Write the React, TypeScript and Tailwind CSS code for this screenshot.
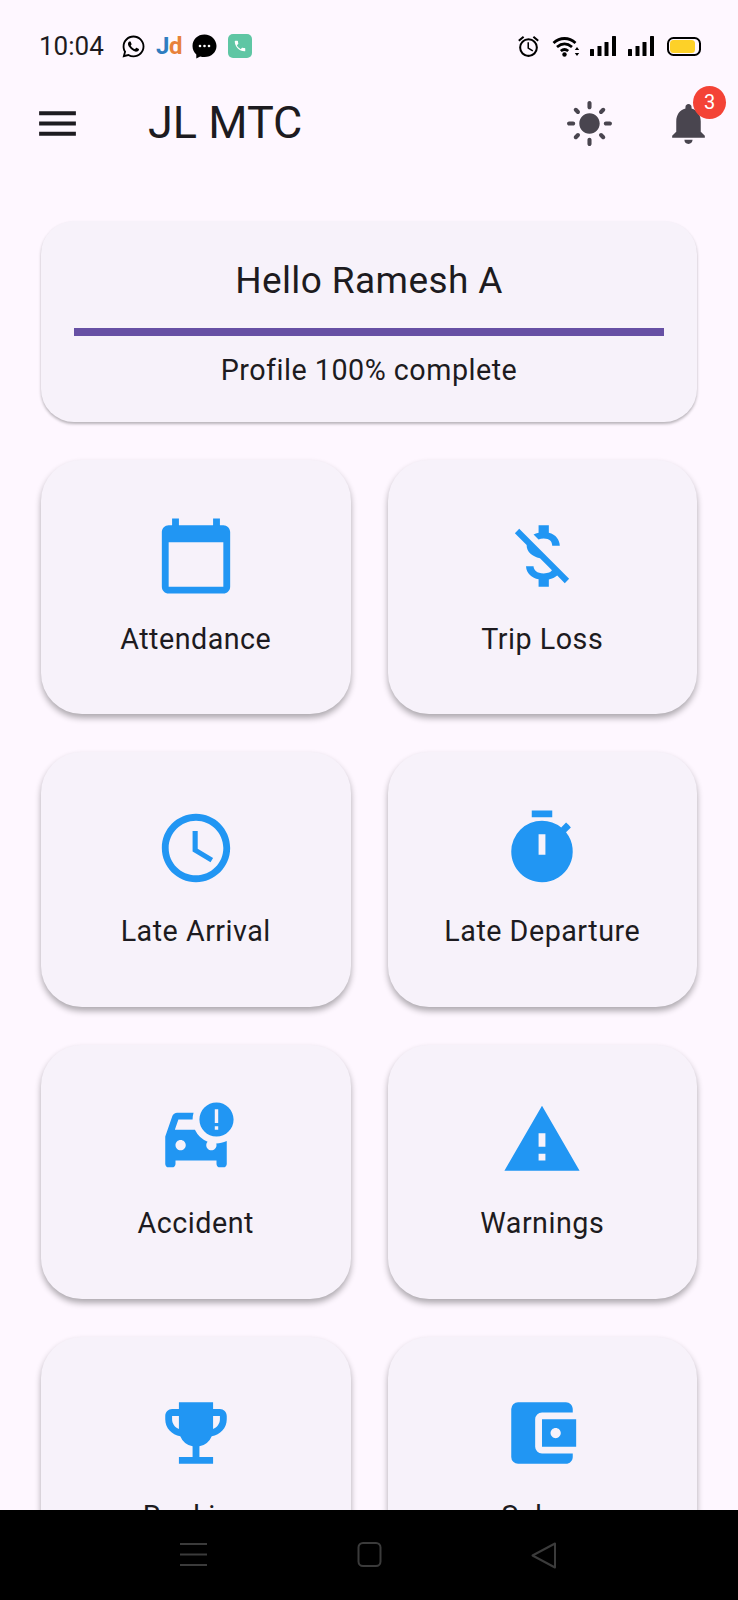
import { FaWhatsapp } from 'react-icons/fa';
import {
  MdAccessTime,
  MdAccountBalanceWallet,
  MdCalendarToday,
  MdCarCrash,
  MdEmojiEvents,
  MdLightMode,
  MdMenu,
  MdMoneyOff,
  MdNotifications,
  MdOutlineAlarm,
  MdTimer,
  MdWarning,
} from 'react-icons/md';

const tiles = [
  { label: 'Attendance', icon: MdCalendarToday },
  { label: 'Trip Loss', icon: MdMoneyOff },
  { label: 'Late Arrival', icon: MdAccessTime },
  { label: 'Late Departure', icon: MdTimer },
  { label: 'Accident', icon: MdCarCrash },
  { label: 'Warnings', icon: MdWarning },
  { label: 'Ranking', icon: MdEmojiEvents },
  { label: 'Salary', icon: MdAccountBalanceWallet },
];

const SignalBars = () => (
  <svg width="26" height="20" viewBox="0 0 26 20" fill="#000">
    <rect x="0" y="13" width="4" height="7" rx="0.6" />
    <rect x="7.5" y="10" width="4" height="10" rx="0.6" />
    <rect x="14.5" y="6" width="4" height="14" rx="0.6" />
    <rect x="22" y="0" width="4" height="20" rx="0.6" />
  </svg>
);

const StatusBar = () => (
  <div className="h-[92px] flex items-center justify-between pl-[39px] pr-[37px]">
    <div className="flex items-center">
      <span className="text-[26px] leading-none text-[#1d1b20] w-[82px]">10:04</span>
      <FaWhatsapp className="w-[25px] h-[25px] text-black" />
      <span className="ml-[10px] w-[26px] text-[24px] leading-none font-bold tracking-[-0.5px]">
        <span className="text-[#2f7dc0]">J</span>
        <span className="text-[#e8813a]">d</span>
      </span>
      <svg className="ml-[10px]" width="25" height="25" viewBox="0 0 25 25">
        <path d="M12.5 0.5C5.6 0.5 0.5 5.4 0.5 12c0 3.5 1.5 6.5 3.8 8.6V24.5l3.9-2.1c1.3.4 2.8.6 4.3.6 6.9 0 12-4.9 12-11S19.4.5 12.5.5z" fill="#000" />
        <circle cx="8" cy="12" r="1.3" fill="#fff" />
        <circle cx="12.5" cy="12" r="1.3" fill="#fff" />
        <circle cx="17" cy="12" r="1.3" fill="#fff" />
      </svg>
      <div className="ml-[11px] w-[24px] h-[24px] rounded-[5px] bg-[#5fc6a4] flex items-center justify-center">
        <svg width="14" height="14" viewBox="0 0 24 24" fill="#fff">
          <path d="M6.6 10.8c1.4 2.8 3.8 5.1 6.6 6.6l2.2-2.2c.3-.3.7-.4 1-.2 1.1.4 2.3.6 3.6.6.6 0 1 .4 1 1V20c0 .6-.4 1-1 1C10.6 21 3 13.4 3 4c0-.6.4-1 1-1h3.5c.6 0 1 .4 1 1 0 1.3.2 2.5.6 3.6.1.3 0 .7-.2 1l-2.3 2.2z" />
        </svg>
      </div>
    </div>
    <div className="flex items-center">
      <MdOutlineAlarm className="w-[25px] h-[25px] text-black" />
      <svg className="ml-[11px]" width="28" height="21" viewBox="0 0 28 21" fill="none">
        <path d="M1.5 7C8 1 17 1 23.5 7" stroke="#000" strokeWidth="2.8" />
        <path d="M5 11c4.8-4 10.2-4 15 0" stroke="#000" strokeWidth="2.8" />
        <path d="M8.8 15c2.5-2 5-2 7.4 0" stroke="#000" strokeWidth="2.8" />
        <circle cx="12.5" cy="18.5" r="2.2" fill="#000" />
        <path d="M25 11l-2.2 3h4.4zM25 20l-2.2-3h4.4z" fill="#000" />
      </svg>
      <div className="ml-[10px]">
        <SignalBars />
      </div>
      <div className="ml-[12px]">
        <SignalBars />
      </div>
      <svg className="ml-[13px]" width="34" height="19" viewBox="0 0 34 19">
        <rect x="1" y="1" width="32" height="17" rx="5.5" fill="none" stroke="#000" strokeWidth="2" />
        <rect x="3" y="3" width="25" height="13" rx="3.5" fill="#fdd128" />
      </svg>
    </div>
  </div>
);

const Header = () => (
  <header className="h-[62px] flex items-center pl-[33px] relative">
    <MdMenu className="w-[49px] h-[49px] text-[#1d1b20]" />
    <h1 className="ml-[66px] -mt-[2px] text-[45px] leading-none font-normal text-[#1d1b20]">JL MTC</h1>
    <div className="ml-auto flex items-center pr-[25px] gap-[50px]">
      <MdLightMode className="w-[49px] h-[49px] text-[#49454f]" />
      <div className="relative">
        <MdNotifications className="w-[49px] h-[49px] text-[#49454f]" />
        <span className="absolute -top-[13px] -right-[13px] w-[33px] h-[33px] rounded-full bg-[#f44336] text-white text-[20px] flex items-center justify-center">
          3
        </span>
      </div>
    </div>
  </header>
);

const ProfileCard = () => (
  <div className="rounded-[33px] bg-[#f7f2fa] shadow-[0_2px_3px_rgba(0,0,0,0.28)] px-[33px] pt-[34px] pb-[31px]">
    <p className="text-[37px] leading-[52px] tracking-[0.4px] text-center text-[#1d1b20]">Hello Ramesh A</p>
    <div className="mt-[21px] h-[8px] bg-[#6750a4]" />
    <p className="mt-[14px] text-[28.7px] leading-[41px] tracking-[0.5px] text-center text-[#1d1b20]">Profile 100% complete</p>
  </div>
);

const BottomNav = () => (
  <div className="h-[90px] shrink-0 bg-black flex items-start justify-between pt-[32px] pl-[180px] pr-[181px]">
    <svg width="27" height="25" viewBox="0 0 27 25" stroke="#3b3b3b" strokeWidth="2">
      <path d="M0 2h27M0 12.5h27M0 23h27" />
    </svg>
    <svg width="25" height="25" viewBox="0 0 25 25" fill="none" stroke="#3b3b3b" strokeWidth="2">
      <rect x="1.5" y="1" width="22" height="23" rx="4.5" />
    </svg>
    <svg width="26" height="27" viewBox="0 0 26 27" fill="none" stroke="#3b3b3b" strokeWidth="2" strokeLinejoin="round">
      <path d="M24 1.5v24L1.5 13.5z" />
    </svg>
  </div>
);

export default function App() {
  return (
    <div className="w-[738px] h-[1600px] flex flex-col overflow-hidden bg-[#fef7ff] text-[#1d1b20]" style={{ fontFamily: 'Roboto, sans-serif' }}>
      <StatusBar />
      <Header />
      <main className="flex-1 overflow-hidden px-[41px] pt-[67px]">
        <ProfileCard />
        <div className="mt-[38px] grid grid-cols-2 gap-x-[37px] gap-y-[38px]">
          {tiles.map(({ label, icon: Icon }) => (
            <div
              key={label}
              className="h-[254.4px] rounded-[41px] bg-[#f7f2fa] shadow-[0_4px_6px_rgba(0,0,0,0.32)] flex flex-col items-center justify-center gap-[21px]"
            >
              <Icon className="w-[82px] h-[82px] text-[#2196f3]" />
              <span className="text-[28.7px] leading-[42px] tracking-[0.5px] text-[#1d1b20]">{label}</span>
            </div>
          ))}
        </div>
      </main>
      <BottomNav />
    </div>
  );
}
